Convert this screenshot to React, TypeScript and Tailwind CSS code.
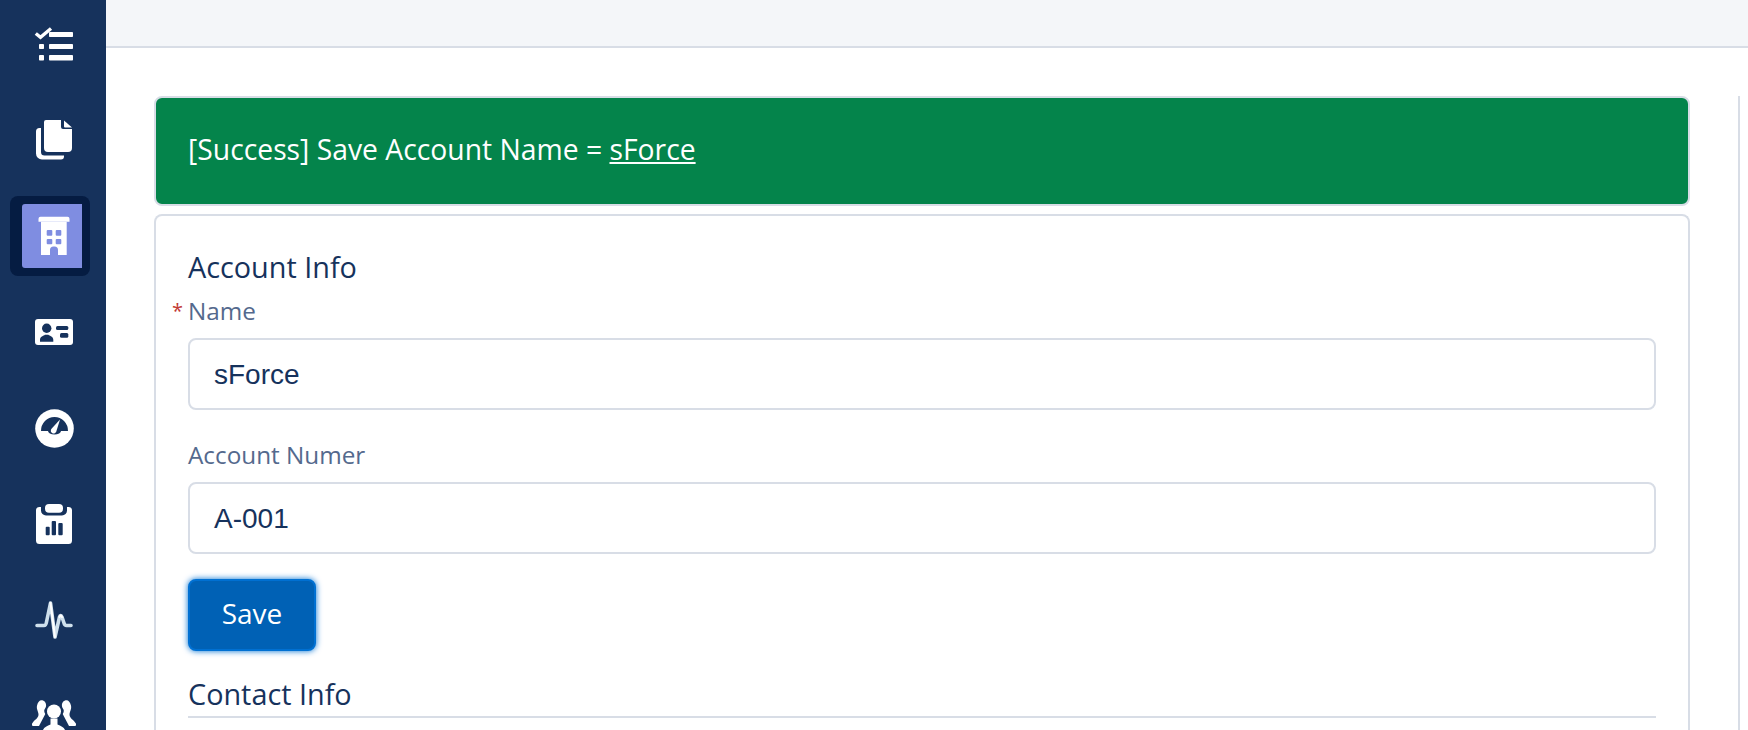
import React from 'react';

const TasksIcon = () => (
  <svg width="40" height="34" viewBox="0 0 40 34" fill="white">
    <path d="M1.800 6.500L6.500 10.300L17 1.500" fill="none" stroke="white" strokeWidth="3.400" />
    <rect x="15" y="5" width="24" height="5" rx="0.800" />
    <rect x="15" y="17" width="24" height="5" rx="0.800" />
    <rect x="15" y="28" width="24" height="5.500" rx="0.800" />
    <rect x="5" y="17" width="5" height="5" rx="0.800" />
    <rect x="5" y="28" width="5" height="5.500" rx="0.800" />
  </svg>
);

const FilesIcon = () => (
  <svg width="36" height="40" viewBox="0 0 36 40" fill="white">
    <path d="M10 0h15v7a2 2 0 0 0 2 2h9v19a4 4 0 0 1-4 4H12a4 4 0 0 1-4-4V2a2 2 0 0 1 2-2z" />
    <path d="M28 .5L36 7.500h-7a1 1 0 0 1-1-1z" />
    <path d="M3.500 8H5v24a3.500 3.500 0 0 0 3.500 3.500H28v1a3 3 0 0 1-3 3H6a6 6 0 0 1-6-6V11.500A3.500 3.500 0 0 1 3.500 8z" />
  </svg>
);

const BuildingIcon = () => (
  <svg width="32" height="40" viewBox="0 0 32 40">
    <path d="M2.500 .7h27a2 2 0 0 1 2 2v3H.5v-3a2 2 0 0 1 2-2z" fill="white" />
    <path d="M3 5.700h25.700V39H20v-5a3.500 3.500 0 0 0-3.500-3.500h-1A3.500 3.500 0 0 0 12 34v5H3z" fill="white" />
    <rect x="8.700" y="14" width="5.600" height="5.700" rx="1" fill="#7f8de1" />
    <rect x="17.700" y="14" width="5.600" height="5.700" rx="1" fill="#7f8de1" />
    <rect x="8.700" y="23" width="5.600" height="5.300" rx="1" fill="#7f8de1" />
    <rect x="17.700" y="23" width="5.600" height="5.300" rx="1" fill="#7f8de1" />
  </svg>
);

const ContactIcon = () => (
  <svg width="38" height="26" viewBox="0 0 38 26">
    <rect width="38" height="26" rx="3" fill="white" />
    <circle cx="11.700" cy="9.300" r="4.700" fill="#16325c" />
    <path d="M5 22.700v-2c0-3 3.500-4 5-5h3.300c1.500 1 5 2 5 5v2z" fill="#16325c" />
    <rect x="21" y="7" width="12.300" height="4" rx="1.500" fill="#16325c" />
    <rect x="25" y="14" width="8.300" height="4.700" rx="1.500" fill="#16325c" />
  </svg>
);

const GaugeIcon = () => (
  <svg width="39" height="39" viewBox="0 0 39 39">
    <circle cx="19.500" cy="19.500" r="19.300" fill="white" />
    <path d="M6 22A13.500 14 0 0 1 33 22H26A6.500 3.500 0 0 1 13 22Z" fill="#16325c" />
    <path d="M25 10.500L21.300 22.500a2.800 2.800 0 1 1-5-2.400z" fill="white" />
  </svg>
);

const ReportIcon = () => (
  <svg width="36" height="40" viewBox="0 0 36 40">
    <path d="M3.500 3H5v3.500A5 5 0 0 0 10 11.500h16a5 5 0 0 0 5-5V3h1.500A3.500 3.500 0 0 1 36 6.500v30a3.500 3.500 0 0 1-3.500 3.500h-29A3.500 3.500 0 0 1 0 36.500v-30A3.500 3.500 0 0 1 3.500 3z" fill="white" />
    <rect x="9" y="0" width="18" height="8.700" rx="4" fill="white" />
    <rect x="9.700" y="22.700" width="4" height="8.600" rx="1" fill="#16325c" />
    <rect x="15.700" y="17" width="4.300" height="14.300" rx="1" fill="#16325c" />
    <rect x="22.300" y="19" width="4.400" height="12.300" rx="1" fill="#16325c" />
  </svg>
);

const PulseIcon = () => (
  <svg width="38" height="40" viewBox="0 0 38 40" fill="none" strokeLinecap="round" strokeLinejoin="round">
    <path d="M2 25.500h7c1.500 0 2-.5 2.500-3.500L15.500 3l4.500 34 4.500-20c.5-2 1.500-2 2.500 0l2 6c.5 1.800 1 2.500 2.500 2.500H36" stroke="#cfe0ec" strokeWidth="3.600" />
    <path d="M15.500 3l4.500 34" stroke="white" strokeWidth="2" />
    <path d="M24.500 17c.5-2 1.500-2 2.500 0" stroke="white" strokeWidth="2" />
  </svg>
);

const sidePerson = 'M9.500.3c2.700 0 4.600 2.200 4.600 5 0 1.700-.7 3-1.600 4.200-.6 1.300-.2 3.200.8 4.500L7 26H1c-1.200 0-1.400-1.400-.7-2.700C2 20 6.500 18.500 6.500 14.500c0-1.800-.9-3.200-1.300-5-.4-1.400-.5-2.800-.1-4.200C5.800 2.300 7.400.3 9.500.3z';
const centerBody = 'M10.500 38v-5.500c0-4.500 4-6.500 8-8v-6h7v6c4 1.500 8 3.500 8 8V38z';

const UsersIcon = () => (
  <svg width="44" height="44" viewBox="0 0 44 44" fill="white">
    <path d={sidePerson} />
    <path d={sidePerson} transform="matrix(-1 0 0 1 44 0)" />
    <circle cx="22" cy="11.500" r="7" stroke="#16325c" strokeWidth="3.600" />
    <path d={centerBody} stroke="#16325c" strokeWidth="3.600" />
    <circle cx="22" cy="11.500" r="7" />
    <path d={centerBody} />
  </svg>
);

const NavItem = ({ children, selected = false }: { children: React.ReactNode; selected?: boolean }) => {
  if (selected) {
    return (
      <div className="h-[96px] flex items-center pl-[10px] shrink-0">
        <div className="w-[80px] h-[80px] rounded-lg bg-[#051c42] flex items-center pl-[12px]">
          <div className="w-[60px] h-[64px] rounded-l-[3px] bg-[#7f8de1] flex items-center justify-center pl-[4px]">
            {children}
          </div>
        </div>
      </div>
    );
  }
  return <div className="h-[96px] flex items-center justify-center pl-[2px] shrink-0">{children}</div>;
};

const Field = ({ label, value, required = false }: { label: string; value: string; required?: boolean }) => (
  <div>
    <label className="relative block h-[28px] leading-[28px] text-[24.3px] text-[#54698d]">
      {required && (
        <abbr className="absolute left-[-16px] top-0 text-[#c23934] no-underline text-[20px]">*</abbr>
      )}
      {label}
    </label>
    <div className="mt-[13px] h-[72px] w-full rounded-lg border-2 border-[#d8dde6] bg-white flex items-center pl-[24px] pt-[2px] text-[28px] text-[#16325c] [font-family:'Liberation_Sans',sans-serif]">
      {value}
    </div>
  </div>
);

export default function App() {
  return (
    <div className="flex h-[730px] w-full overflow-hidden bg-white [font-family:'Open_Sans',sans-serif]">
      <nav className="w-[106px] shrink-0 bg-[#16325c] overflow-hidden">
        <div className="-mt-[4px] flex flex-col">
          <NavItem><TasksIcon /></NavItem>
          <NavItem><FilesIcon /></NavItem>
          <NavItem selected><BuildingIcon /></NavItem>
          <NavItem><ContactIcon /></NavItem>
          <NavItem><GaugeIcon /></NavItem>
          <NavItem><ReportIcon /></NavItem>
          <NavItem><PulseIcon /></NavItem>
          <NavItem><div className="mt-[12px]"><UsersIcon /></div></NavItem>
        </div>
      </nav>
      <div className="flex-1 min-w-0 flex flex-col">
        <header className="h-[48px] shrink-0 bg-[#f4f6f9] border-b-2 border-[#d8dde6]" />
        <main className="flex-1 min-h-0 flex pt-[48px] pl-[48px]">
          <div className="w-[1536px] shrink-0 flex flex-col gap-[8px]">
            <div className="h-[110px] shrink-0 rounded-lg border-2 border-[#d8dde6] bg-[#04844b] flex items-center pl-[32px] pb-[4px] text-[28.3px] text-white">
              <span>
                [Success] Save Account Name = <a className="underline">sForce</a>
              </span>
            </div>
            <section className="flex-1 rounded-t-lg border-2 border-b-0 border-[#d8dde6] pl-[32px] pr-[32px] pt-[29px]">
              <h3 className="h-[52px] leading-[44px] text-[28.8px] text-[#16325c]">Account Info</h3>
              <Field label="Name" value="sForce" required />
              <div className="mt-[31px]">
                <Field label="Account Numer" value="A-001" />
              </div>
              <button className="mt-[25px] block w-[128px] h-[72px] rounded-lg border-2 border-[#0070d2] bg-[#0061b5] pb-[4px] text-white text-[28px] shadow-[0_0_6px_#0070d2]">
                Save
              </button>
              <h3 className="mt-[22px] h-[45px] leading-[41px] border-b-2 border-[#d8dde6] text-[28.8px] text-[#16325c]">
                Contact Info
              </h3>
            </section>
          </div>
          <div className="ml-[48px] w-[2px] bg-[#d8dde6]" />
        </main>
      </div>
    </div>
  );
}
